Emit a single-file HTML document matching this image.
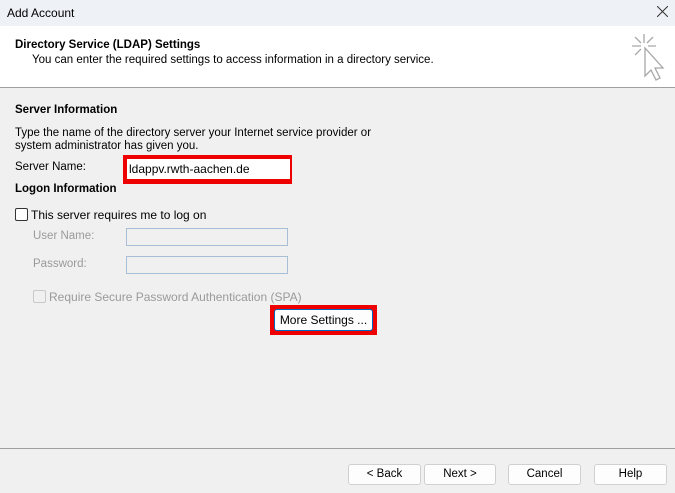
<!DOCTYPE html>
<html><head><style>
body{margin:0;width:675px;height:493px;background:#f0f0f0;font-family:"Liberation Sans",sans-serif;font-size:11.5px;color:#000;position:relative;overflow:hidden}
.a{position:absolute;white-space:nowrap}
.btn{position:absolute;height:21px;top:464px;background:#fdfdfd;border:1px solid #d0d0d0;border-radius:3px;box-sizing:border-box;text-align:center;line-height:19px;font-size:11.5px}
.in{position:absolute;height:18px;border:1px solid #a8bdd6;background:#f0f0f0;box-sizing:border-box;width:162px;left:126px}
.g{color:#9a9a9a}
</style></head><body>
<div class="a" style="left:0;top:0;width:675px;height:26px;background:#eef1f6"></div>
<div class="a" style="left:7px;top:6px;font-size:12px">Add Account</div>
<svg class="a" style="left:657px;top:6px" width="11" height="11" viewBox="0 0 11 11" stroke="#333" stroke-width="1"><path d="M0 0L11 11M11 0L0 11"/></svg>
<div class="a" style="left:0;top:26px;width:675px;height:61px;background:#fff;border-bottom:1px solid #a0a0a0"></div>
<div class="a" style="left:15px;top:39px;font-weight:bold">Directory Service (LDAP) Settings</div>
<div class="a" style="left:32px;top:54px">You can enter the required settings to access information in a directory service.</div>
<svg class="a" style="left:630px;top:32px" width="36" height="50" viewBox="0 0 36 50" fill="none" stroke="#a8a8a8" stroke-width="1.3">
<path d="M14 2v9M2 14h9M5 5l6 6M23 5l-6 6M18 14h8M5 23l6-6"/>
<path d="M15 16v28l6-6 5 10 4-2-5-10h8z" fill="#fff"/>
</svg>
<div class="a" style="left:15px;top:104px;font-weight:bold">Server Information</div>
<div class="a" style="left:15px;top:127px">Type the name of the directory server your Internet service provider or</div>
<div class="a" style="left:15px;top:140px">system administrator has given you.</div>
<div class="a" style="left:15px;top:161px">Server Name:</div>
<div class="a" style="left:123px;top:155px;width:169px;height:29px;background:#e00;"></div>
<div class="a" style="left:127px;top:159px;width:161px;height:20px;background:#fff;line-height:20px;padding-left:2px;font-size:12px">ldappv.rwth-aachen.de</div>
<div class="a" style="left:15px;top:183px;font-weight:bold">Logon Information</div>
<div class="a" style="left:15px;top:208px;width:13px;height:13px;border:1px solid #333;border-radius:2px;box-sizing:border-box;background:#fff"></div>
<div class="a" style="left:31px;top:208px;font-size:12px">This server requires me to log on</div>
<div class="a g" style="left:33px;top:230px">User Name:</div>
<div class="in" style="top:228px"></div>
<div class="a g" style="left:33px;top:258px">Password:</div>
<div class="in" style="top:256px"></div>
<div class="a" style="left:33px;top:290px;width:13px;height:13px;border:1px solid #c8c8c8;border-radius:2px;box-sizing:border-box"></div>
<div class="a g" style="left:49px;top:290px;font-size:12px">Require Secure Password Authentication (SPA)</div>
<div class="a" style="left:270px;top:305px;width:107px;height:30px;background:#e00"></div>
<div class="a" style="left:274px;top:309px;width:99px;height:22px;background:#fdfdfd;border:1px solid #0067c0;box-sizing:border-box;border-radius:3px;text-align:center;line-height:20px;font-size:12px">More Settings ...</div>
<div class="a" style="left:0;top:448px;width:675px;height:1px;background:#a0a0a0"></div>
<div class="btn" style="left:348px;width:73px">&lt; Back</div>
<div class="btn" style="left:424px;width:72px">Next &gt;</div>
<div class="btn" style="left:508px;width:73px">Cancel</div>
<div class="btn" style="left:594px;width:73px">Help</div>
</body></html>
